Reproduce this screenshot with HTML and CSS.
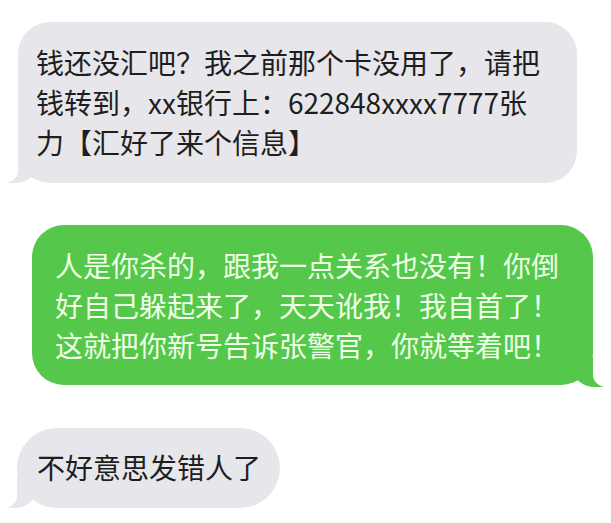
FILE: index.html
```html
<!DOCTYPE html>
<html lang="zh-CN">
<head>
    <meta charset="UTF-8" />
    <title>短信</title>
    <link rel="stylesheet" href="styles.css">
</head>
<body>
    <div class="chat">
        <div class="msg in first">钱还没汇吧？我之前那个卡没用了，请把<br>钱转到，xx银行上：622848xxxx7777张<br>力【汇好了来个信息】</div>
        <div class="msg out">人是你杀的，跟我一点关系也没有！你倒<br>好自己躲起来了，天天讹我！我自首了！<br>这就把你新号告诉张警官，你就等着吧！</div>
        <div class="msg in last">不好意思发错人了</div>
    </div>
</body>
</html>
```

FILE: styles.css
```css
*{margin:0;padding:0;box-sizing:border-box;}
body{background:#fff;font-family:"Noto Sans CJK TC","Noto Sans CJK SC",sans-serif;}
.chat{display:flex;flex-direction:column;align-items:flex-start;padding-top:22px;}
.msg{position:relative;z-index:0;font-size:28px;line-height:40px;white-space:nowrap;}
.msg.in{background:#e6e6eb;color:#1e1e1e;}
.msg.out{background:#55c84b;color:#f0ffe8;}

.first{margin-left:18px;width:559px;height:161px;padding:20px 18px 0;border-radius:32px;}
.out{margin-top:42px;margin-left:32px;width:561px;height:160px;padding:20px 23px 0;border-radius:32px;}
.last{margin-top:43px;margin-left:17px;width:263px;height:80px;padding:19px 20px 0;border-radius:40px;}

/* 气泡尾巴 */
.msg::before{z-index:-1;}
.msg.in::before{content:"";position:absolute;bottom:0;left:-13px;width:32px;height:32px;background:#e6e6eb;border-bottom-right-radius:22px 18px;}
.msg.in::after{content:"";position:absolute;bottom:0;left:-36px;width:36px;height:33px;background:#fff;border-bottom-right-radius:14px 12px;}
.msg.out::before{content:"";position:absolute;bottom:-2px;right:-10px;width:30px;height:30px;background:#55c84b;border-bottom-left-radius:22px 18px;}
.msg.out::after{content:"";position:absolute;bottom:-2px;right:-34px;width:34px;height:32px;background:#fff;border-bottom-left-radius:14px 12px;}
```
